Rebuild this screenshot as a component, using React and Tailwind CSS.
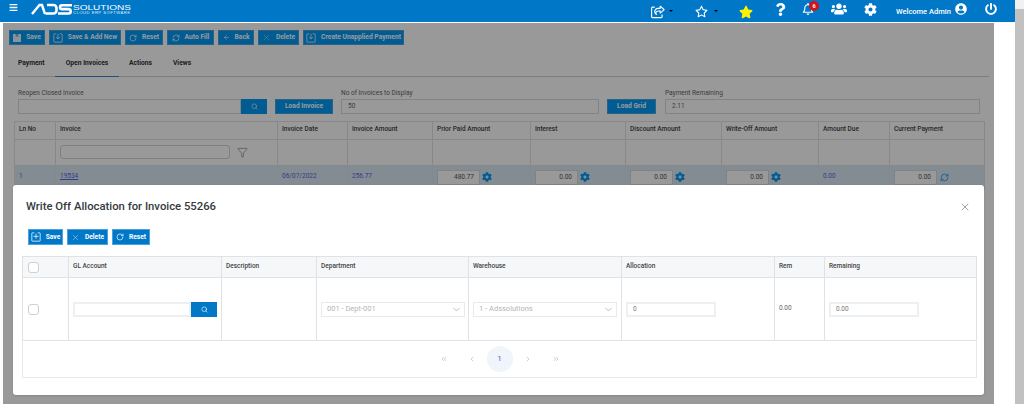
import { ChevronDown, ChevronLeft, ChevronRight, ChevronsLeft, ChevronsRight, Filter, RefreshCw, RotateCw, Search, X, ArrowLeft } from 'lucide-react';
import { FaBars, FaCog, FaPowerOff, FaQuestion, FaStar, FaUserCircle, FaUsers } from 'react-icons/fa';
import { FaRegBell, FaRegShareFromSquare, FaRegStar } from 'react-icons/fa6';

const font = 'font-["Roboto","Noto_Sans",sans-serif]';

function SaveIcon({ filled, plus }) {
    if (filled) {
        return (
            <svg width="8" height="8" viewBox="0 0 12 12" className="text-white/90">
                <path d="M0 0h12v12H0z" fill="currentColor" />
                <path d="M4 0h4v4H4z" fill="#0078c8" opacity="0.5" />
            </svg>
        );
    }
    return (
        <svg width="10" height="10" viewBox="0 0 12 12" fill="none" stroke="currentColor" strokeWidth="0.9">
            <path d="M4 1H1.5a.5.5 0 0 0-.5.5v9a.5.5 0 0 0 .5.5h9a.5.5 0 0 0 .5-.5v-9a.5.5 0 0 0-.5-.5H8" />
            {plus ? <path d="M6 2v6M3 5.2h6" /> : <path d="M6 1v6M3.8 5 6 7.2 8.2 5" />}
        </svg>
    );
}

function Btn({ icon, label, className }) {
    return (
        <button className={`flex items-center justify-center gap-[5px] border border-[#4aa3dc] text-white text-[6.7px] font-bold whitespace-nowrap ${className}`}>
            {icon}
            {label}
        </button>
    );
}

function Cell({ children, className = '' }) {
    return <td className={`border border-[#dfe3e6] px-[4px] align-middle ${className}`}>{children}</td>;
}

function PayInput({ value, refresh }) {
    return (
        <div className="flex items-center gap-[2px]">
            <div className="w-[43px] h-[15px] bg-white border border-[#d5d9dc] text-right pr-[5px] text-[6.5px] leading-[13px] text-[#555]">{value}</div>
            {refresh ? <RefreshCw size={9} strokeWidth={2} className="text-[#0099f5] ml-[1px]" /> : <FaCog size={10} className="text-[#0099f5]" />}
        </div>
    );
}

function Field({ value, className = '' }) {
    return <div className={`h-[15px] bg-white border-2 border-[#edf0f2] pl-[5px] text-[6.5px] leading-[11px] text-[#777] ${className}`}>{value}</div>;
}

function SelectBox({ value, className = '' }) {
    return (
        <div className={`flex items-center justify-between h-[15px] border border-[#e8ebed] pl-[5px] pr-[2px] text-[7.5px] text-[#b5b5b5] ${className}`}>
            {value}
            <ChevronDown size={11} strokeWidth={1} className="text-[#777]" />
        </div>
    );
}

function Caret() {
    return <div className="w-0 h-0 border-x-[2px] border-x-transparent border-t-[2px] border-t-black mt-[7px]" />;
}

function Logo() {
    return (
        <svg width="102" height="12" viewBox="0 0 102 12" fill="none" className="ml-[13px] mt-[3px] shrink-0">
            <g stroke="white">
                <path d="M1 11 8.5 2H11l3 9" strokeWidth="2.4" />
                <path d="M16 2h6.5a3 3 0 0 1 3 3v2.5a3 3 0 0 1-3 3H14.5" strokeWidth="2.6" />
                <path d="M41 2.2H31a1.9 1.9 0 0 0 0 3.9h6.5a2.2 2.2 0 0 1 0 4.4H27" strokeWidth="2.6" />
            </g>
            <text x="42" y="6.6" fill="white" fontFamily="Liberation Sans" fontSize="8" textLength="58" lengthAdjust="spacingAndGlyphs">SOLUTIONS</text>
            <text x="42" y="10.6" fill="white" fillOpacity="0.9" fontFamily="Liberation Sans" fontSize="4.2" textLength="57" lengthAdjust="spacing">CLOUD ERP SOFTWARE</text>
        </svg>
    );
}

function Header() {
    return (
        <header className="flex items-start h-[22px] bg-[#0078c8] text-white relative">
            <FaBars size={9} className="ml-[9px] mt-[3px]" />
            <Logo />
            <div className="flex-1" />
            <div className="flex items-start h-[22px] pt-[3px] mr-[18px]">
                <FaRegShareFromSquare size={14} className="mt-[2px] mr-[4px]" />
                <Caret />
                <FaRegStar size={13} className="ml-[22px] mr-[6px] mt-[2px]" />
                <Caret />
                <FaStar size={14} className="ml-[21px] mt-[2px] text-[#fff200]" />
                <FaQuestion size={13} className="ml-[21px]" />
                <div className="relative ml-[15px]">
                    <FaRegBell size={12} />
                    <span className="absolute -top-[2px] left-[7px] w-[10px] h-[10px] rounded-full bg-[#d3121a] text-[5.5px] leading-[10px] text-center font-bold">6</span>
                </div>
                <FaUsers size={16} className="ml-[17px] -mt-[2px]" />
                <FaCog size={13} className="ml-[17px]" />
                <span className="ml-[19px] w-[56px] text-[7.5px] font-medium whitespace-nowrap mt-[3px]">Welcome Admin</span>
                <FaUserCircle size={12} className="ml-[3px]" />
                <FaPowerOff size={12} className="ml-[18px]" />
            </div>
        </header>
    );
}

function Page() {
    return (
        <div className="relative h-[381px] ml-[3px] w-[991px] bg-white overflow-hidden text-[6.5px] text-[#444]">
            {/* Toolbar */}
            <div className="flex gap-[4px] pl-[6px] pt-[7px]">
                <Btn className="w-[36px] h-[15px] bg-[#0099f5]" icon={<SaveIcon filled />} label="Save" />
                <Btn className="w-[72px] h-[15px] bg-[#0099f5]" icon={<SaveIcon />} label="Save & Add New" />
                <Btn className="w-[38px] h-[15px] bg-[#0099f5]" icon={<RotateCw size={8} />} label="Reset" />
                <Btn className="w-[47px] h-[15px] bg-[#0099f5]" icon={<RefreshCw size={8} />} label="Auto Fill" />
                <Btn className="w-[36px] h-[15px] bg-[#0099f5]" icon={<ArrowLeft size={7} />} label="Back" />
                <Btn className="w-[41px] h-[15px] bg-[#0099f5]" icon={<X size={9} strokeWidth={1} />} label="Delete" />
                <Btn className="w-[101px] h-[15px] bg-[#0099f5]" icon={<SaveIcon />} label="Create Unapplied Payment" />
            </div>

            {/* Tabs */}
            <div className="flex mt-[11px] mx-[5px] h-[21px] border-b border-[#cfd3d6] text-[6.7px] font-bold text-[#333]">
                <div className="pl-[10px] w-[47px] pt-[2px]">Payment</div>
                <div className="w-[64px] h-[21px] border-b border-[#3b82d6] text-center pt-[2px]">Open Invoices</div>
                <div className="pl-[10px] w-[54px] pt-[2px]">Actions</div>
                <div className="pt-[2px]">Views</div>
            </div>

            {/* Form row */}
            <div className="flex items-end ml-[15px] mt-[12px]">
                <div>
                    <div className="text-[#666]">Reopen Closed Invoice</div>
                    <div className="flex h-[15px]">
                        <div className="w-[223px] bg-white border border-[#d8dcdf]" />
                        <div className="w-[26px] bg-[#0099f5] flex items-center justify-center text-white"><Search size={7} /></div>
                    </div>
                </div>
                <Btn className="w-[58px] h-[15px] ml-[8px] bg-[#0099f5]" label="Load Invoice" />
                <div className="ml-[8px]">
                    <div className="text-[#666]">No of Invoices to Display</div>
                    <div className="w-[258px] h-[15px] border border-[#d8dcdf] pl-[6px] leading-[13px] text-[#666]">50</div>
                </div>
                <Btn className="w-[49px] h-[15px] ml-[8px] bg-[#0099f5]" label="Load Grid" />
                <div className="ml-[9px]">
                    <div className="text-[#666]">Payment Remaining</div>
                    <div className="w-[315px] h-[15px] border border-[#d8dcdf] pl-[6px] leading-[13px] text-[#666]">2.11</div>
                </div>
            </div>

            {/* Invoice table */}
            <table className="table-fixed border-collapse ml-[11px] mt-[7px] w-[970px]">
                <colgroup>
                    <col className="w-[41px]" />
                    <col className="w-[222px]" />
                    <col className="w-[70px]" />
                    <col className="w-[85px]" />
                    <col className="w-[98px]" />
                    <col className="w-[95px]" />
                    <col className="w-[96px]" />
                    <col className="w-[97px]" />
                    <col className="w-[71px]" />
                    <col className="w-[95px]" />
                </colgroup>
                <tbody>
                    <tr className="h-[18px] font-medium text-[#444]">
                        <Cell>Ln No</Cell>
                        <Cell>Invoice</Cell>
                        <Cell>Invoice Date</Cell>
                        <Cell>Invoice Amount</Cell>
                        <Cell>Prior Paid Amount</Cell>
                        <Cell>Interest</Cell>
                        <Cell>Discount Amount</Cell>
                        <Cell>Write-Off Amount</Cell>
                        <Cell>Amount Due</Cell>
                        <Cell>Current Payment</Cell>
                    </tr>
                    <tr className="h-[26px]">
                        <Cell />
                        <Cell>
                            <div className="flex items-center">
                                <div className="w-[170px] h-[14px] border border-[#d0d4d7] rounded-[3px]" />
                                <Filter size={11} strokeWidth={1} className="ml-[7px]" />
                            </div>
                        </Cell>
                        <Cell /><Cell /><Cell /><Cell /><Cell /><Cell /><Cell /><Cell />
                    </tr>
                    <tr className="h-[24px] bg-[#dbe9f3] text-[#5a68e0]">
                        <Cell>1</Cell>
                        <Cell><span className="underline">19534</span></Cell>
                        <Cell>06/07/2022</Cell>
                        <Cell>256.77</Cell>
                        <Cell><PayInput value="480.77" /></Cell>
                        <Cell><PayInput value="0.00" /></Cell>
                        <Cell><PayInput value="0.00" /></Cell>
                        <Cell><PayInput value="0.00" /></Cell>
                        <Cell>0.00</Cell>
                        <Cell><PayInput value="0.00" refresh /></Cell>
                    </tr>
                </tbody>
            </table>

            {/* Backdrop */}
            <div className="absolute inset-0 bg-black/40" />
        </div>
    );
}

function Modal() {
    return (
        <div className="absolute left-[13px] top-[185px] w-[971px] h-[210px] bg-white rounded-[3px] shadow-sm px-[9px] text-[6.5px] text-[#444]">
            <div className="flex items-center justify-between h-[44px] pl-[4px] pr-[4px]">
                <h2 className="text-[11.3px] font-medium text-[#343a40]">Write Off Allocation for Invoice 55266</h2>
                <X size={12} strokeWidth={1.1} className="text-[#555]" />
            </div>
            <div className="flex gap-[4px] ml-[6px]">
                <Btn className="w-[35px] h-[16px] bg-[#0078c8]" icon={<SaveIcon plus />} label="Save" />
                <Btn className="w-[41px] h-[16px] bg-[#0078c8]" icon={<X size={9} strokeWidth={1} />} label="Delete" />
                <Btn className="w-[38px] h-[16px] bg-[#0078c8]" icon={<RotateCw size={8} />} label="Reset" />
            </div>

            <table className="table-fixed border-collapse mt-[11px] w-[954px]">
                <colgroup>
                    <col className="w-[46px]" />
                    <col className="w-[153px]" />
                    <col className="w-[95px]" />
                    <col className="w-[152px]" />
                    <col className="w-[153px]" />
                    <col className="w-[153px]" />
                    <col className="w-[50px]" />
                    <col className="w-[152px]" />
                </colgroup>
                <tbody>
                    <tr className="h-[21px] bg-[#f6f7f9] font-medium">
                        <Cell><div className="w-[11px] h-[11px] bg-white border border-[#ccd1d5] rounded-[3px] ml-[1px]" /></Cell>
                        <Cell>GL Account</Cell>
                        <Cell>Description</Cell>
                        <Cell>Department</Cell>
                        <Cell>Warehouse</Cell>
                        <Cell>Allocation</Cell>
                        <Cell>Rem</Cell>
                        <Cell>Remaining</Cell>
                    </tr>
                    <tr className="h-[63px]">
                        <Cell><div className="w-[11px] h-[11px] bg-white border border-[#ccd1d5] rounded-[3px] ml-[1px]" /></Cell>
                        <Cell>
                            <div className="flex h-[15px]">
                                <div className="w-[118px] border-2 border-[#edf0f2]" />
                                <div className="w-[26px] bg-[#0078c8] flex items-center justify-center text-white"><Search size={7} /></div>
                            </div>
                        </Cell>
                        <Cell />
                        <Cell><SelectBox value="001 - Dept-001" className="w-[144px]" /></Cell>
                        <Cell><SelectBox value="1 - Adssolutions" className="w-[144px]" /></Cell>
                        <Cell><Field value="0" className="w-[90px]" /></Cell>
                        <Cell className="text-[#666]">0.00</Cell>
                        <Cell><Field value="0.00" className="w-[90px]" /></Cell>
                    </tr>
                    <tr className="h-[37px]">
                        <td colSpan={8} className="border border-[#e8ebed]">
                            <div className="flex items-center justify-center text-[#8a8a8a] gap-[11px]">
                                <ChevronsLeft size={8} strokeWidth={1.2} />
                                <ChevronLeft size={8} strokeWidth={1.2} className="ml-[9px]" />
                                <div className="w-[26px] h-[26px] rounded-full bg-[#eff5fb] text-[#3b6fd6] text-[8px] leading-[26px] text-center">1</div>
                                <ChevronRight size={8} strokeWidth={1.2} />
                                <ChevronsRight size={8} strokeWidth={1.2} className="ml-[9px]" />
                            </div>
                        </td>
                    </tr>
                </tbody>
            </table>
        </div>
    );
}

export default function App() {
    return (
        <div className={`relative flex w-[1024px] h-[404px] overflow-hidden bg-white ${font}`}>
            <div className="w-[1015px]">
                <Header />
                <div className="h-px bg-white" />
                <Page />
            </div>
            {/* Scrollbar */}
            <div className="w-[9px] bg-[#f1f1f1] pt-[9px]">
                <div className="h-full bg-[#c1c1c1]" />
            </div>
            <Modal />
        </div>
    );
}
